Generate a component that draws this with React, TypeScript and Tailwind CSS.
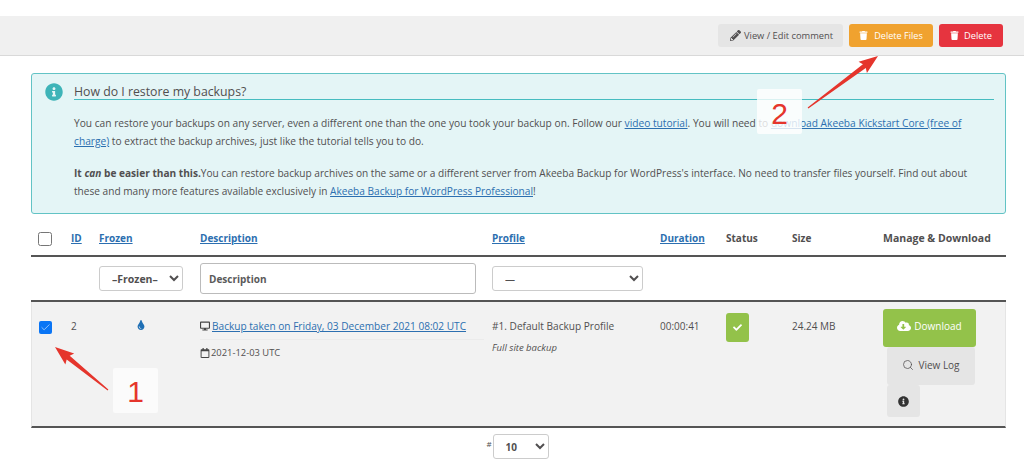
import React from "react";
import { FaPencilAlt, FaTrash, FaInfoCircle, FaTint, FaDesktop, FaRegCalendar, FaCheck, FaCloudDownloadAlt } from "react-icons/fa";
import { Search, Check } from "lucide-react";

const cols = "grid grid-cols-[40px_28px_101px_292px_168px_66px_66px_91px_123px]";
const rowCols = "grid grid-cols-[39px_28px_101px_292px_168px_66px_66px_91px_122px]";
const link = "text-[#2c6fb0] underline";

function Arrow({ className, x1, y1, x2, y2 }: { className: string; x1: number; y1: number; x2: number; y2: number }) {
  const dx = x2 - x1, dy = y2 - y1;
  const len = Math.hypot(dx, dy);
  const ux = dx / len, uy = dy / len;
  const nx = -uy, ny = ux;
  const p = (a: number, b: number) => `${x1 + ux * a + nx * b},${y1 + uy * a + ny * b}`;
  const head = 17;
  const pts = [p(0, 0.6), p(len - head, 2.4), p(len - head - 2, 7), p(len, 0), p(len - head - 2, -7), p(len - head, -2.4), p(0, -0.6)].join(" ");
  return (
    <svg className={className} width="1024" height="467" viewBox="0 0 1024 467">
      <polygon points={pts} fill="#e5352c" />
    </svg>
  );
}

export default function App() {
  return (
    <div className="relative h-[467px] w-[1024px] overflow-hidden bg-white font-['Open_Sans',sans-serif] text-[10px] text-[#514f50]">
      <div className="mt-4 flex h-10 items-start justify-end gap-[6px] border-b border-[#d9d9d9] bg-[#f0f0f0] pr-[21px] pt-2">
        <button className="flex h-[23px] w-[125px] items-center justify-center gap-[3px] rounded-[3px] bg-[#e5e5e5] pl-[2px] text-[9.3px] text-[#514f50]">
          <FaPencilAlt className="h-[11px] w-[11px]" /> View / Edit comment
        </button>
        <button className="flex h-[23px] w-[84px] items-center justify-center gap-[6px] rounded-[3px] bg-[#f0a22f] text-[9.1px] text-white">
          <FaTrash className="h-[9px] w-[9px]" /> Delete Files
        </button>
        <button className="flex h-[23px] w-[64px] items-center justify-center gap-[5px] rounded-[3px] bg-[#e6343f] text-[9.3px] text-white">
          <FaTrash className="h-[9px] w-[9px]" /> Delete
        </button>
      </div>

      <div className="ml-[31px] mt-[17px] flex h-[141px] w-[975px] rounded-[3px] border border-[#62c3c5] bg-[#e4f5f6] pl-[13px] pr-[11px] pt-2">
        <FaInfoCircle className="mt-[1px] h-[18px] w-[18px] shrink-0 text-[#3eb4b8]" />
        <div className="ml-[11px] flex-1">
          <h4 className="h-[18px] border-b border-[#46bcc0] text-[12.3px] leading-[20px] text-[#514f50]">How do I restore my backups?</h4>
          <p className="mt-[14px] pr-[20px] text-[10.2px] leading-[18px]">
            You can restore your backups on any server, even a different one than the one you took your backup on. Follow our <a className={link}>video tutorial</a>. You will need to <a className={link}>download Akeeba Kickstart Core (free of charge)</a> to extract the backup archives, just like the tutorial tells you to do.
          </p>
          <p className="mt-[14px] text-[10.12px] leading-[18px]">
            <b>It </b><b className="italic">can</b><b> be easier than this.</b>You can restore backup archives on the same or a different server from Akeeba Backup for WordPress's interface. No need to transfer files yourself. Find out about these and many more features available exclusively in <a className={link}>Akeeba Backup for WordPress Professional</a>!
          </p>
        </div>
      </div>

      <div className="ml-[31px] w-[975px]">
        <div className={`${cols} h-[43px] items-center border-b-2 border-[#555] pt-[8px] text-[10px] font-bold`}>
          <div className="pl-[7px]"><input type="checkbox" className="block h-[14px] w-[14px]" /></div>
          <a className={link}>ID</a>
          <a className={link}>Frozen</a>
          <a className={link}>Description</a>
          <a className={link}>Profile</a>
          <a className={link}>Duration</a>
          <div>Status</div>
          <div>Size</div>
          <div className="whitespace-nowrap text-[10.5px]">Manage &amp; Download</div>
        </div>

        <div className={`${cols} h-[45px] items-center border-b-2 border-[#555]`}>
          <div /><div />
          <select className="h-[25px] w-[84px] rounded-[3px] border border-[#ccc] bg-white pl-2 text-[10.5px] font-bold">
            <option>–Frozen–</option>
          </select>
          <input placeholder="Description" className="h-[31px] w-[276px] rounded-[3px] border border-[#bbb] bg-white px-2 text-[10px] font-bold placeholder:text-[#5a5a5a]" />
          <select className="h-[25px] w-[151px] rounded-[3px] border border-[#ccc] bg-white pl-2 text-[10px]">
            <option>—</option>
          </select>
        </div>

        <div className={`${rowCols} h-[126px] border-x border-b-2 border-x-[#e5e5e5] border-b-[#555] bg-[#f2f2f2] pt-[17px]`}>
          <div className="pl-[7px] pt-[2px]">
            <div className="relative h-[13px] w-[13px]">
              <input type="checkbox" defaultChecked className="block h-[13px] w-[13px] appearance-none rounded-[2px] bg-[#0a75f5]" />
              <Check className="pointer-events-none absolute left-[1px] top-[1px] h-[11px] w-[11px] text-[#cfe3fb]" strokeWidth={1.5} />
            </div>
          </div>
          <div className="leading-[14px]">2</div>
          <div className="pl-[37px] pt-[1px]"><FaTint className="h-[10px] w-[10px] text-[#1f6fb5]" /></div>
          <div className="pr-[8px]">
            <div className="flex h-[21px] items-start gap-[2px] border-b border-[#ebebeb] text-[10.1px] leading-[14px]">
              <FaDesktop className="mt-[2px] h-[10px] w-[10px] text-[#444]" />
              <a className={link}>Backup taken on Friday, 03 December 2021 08:02 UTC</a>
            </div>
            <div className="mt-[6px] flex items-center gap-[1px] text-[9.4px]">
              <FaRegCalendar className="h-[10px] w-[10px] text-[#444]" /> 2021-12-03 UTC
            </div>
          </div>
          <div>
            <div className="text-[10.1px] leading-[14px]">#1. Default Backup Profile</div>
            <div className="mt-2 text-[9.5px] italic">Full site backup</div>
          </div>
          <div className="leading-[14px]">00:00:41</div>
          <div>
            <div className="-mt-[6px] flex h-[29px] w-[23px] items-center justify-center rounded-[3px] bg-[#93c24a]">
              <FaCheck className="h-[9px] w-[9px] text-white" />
            </div>
          </div>
          <div className="leading-[14px]">24.24 MB</div>
          <div className="-mt-[10px]">
            <button className="flex h-[38px] w-[93px] items-center justify-center gap-[3px] rounded-[3px] bg-[#93c24a] pb-1 text-white">
              <FaCloudDownloadAlt className="h-[14px] w-[14px]" /> Download
            </button>
            <button className="ml-1 flex h-[38px] w-[88px] items-center justify-center gap-1 rounded-[3px] bg-[#e5e5e5] pb-[2px]">
              <Search className="h-[12px] w-[12px]" strokeWidth={1.5} /> View Log
            </button>
            <button className="ml-1 flex h-[32px] w-[33px] items-center justify-center rounded-[3px] bg-[#e5e5e5]">
              <FaInfoCircle className="h-[11px] w-[11px] text-[#333]" />
            </button>
          </div>
        </div>

        <div className="mt-[6px] flex items-start justify-center pr-[2px]">
          <span className="mr-[1px] mt-[4px] text-[8px]">#</span>
          <select className="h-[25px] w-[56px] rounded-[3px] border border-[#ccc] bg-white pl-2 text-[10px] font-bold">
            <option>10</option>
          </select>
        </div>
      </div>

      <div className="absolute left-[113px] top-[368px] flex h-[45px] w-[45px] items-center justify-center rounded-[2px] bg-[#fbfbfb] pt-[2px] font-['Liberation_Sans',sans-serif] text-[30px] text-[#e5352c]">1</div>
      <div className="absolute left-[757px] top-[89px] flex h-[45px] w-[45px] items-center justify-center rounded-[2px] bg-white/80 pt-[3px] font-['Liberation_Sans',sans-serif] text-[30px] text-[#e5352c]">2</div>
      <Arrow className="absolute left-0 top-0" x1={108} y1={390} x2={55} y2={347} />
      <Arrow className="absolute left-0 top-0" x1={808} y1={108} x2={878} y2={56} />
    </div>
  );
}
